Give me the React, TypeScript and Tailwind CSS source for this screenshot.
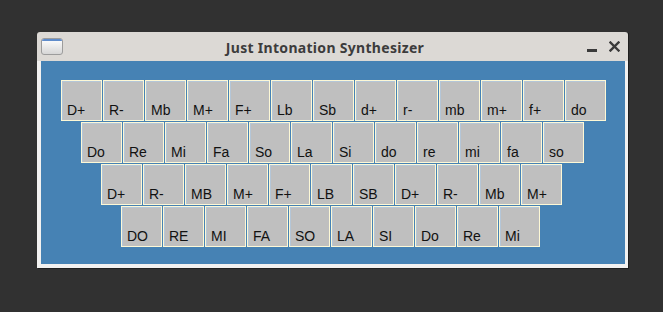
const rows = [
	['D+', 'R-', 'Mb', 'M+', 'F+', 'Lb', 'Sb', 'd+', 'r-', 'mb', 'm+', 'f+', 'do'],
	['Do', 'Re', 'Mi', 'Fa', 'So', 'La', 'Si', 'do', 're', 'mi', 'fa', 'so'],
	['D+', 'R-', 'MB', 'M+', 'F+', 'LB', 'SB', 'D+', 'R-', 'Mb', 'M+'],
	['DO', 'RE', 'MI', 'FA', 'SO', 'LA', 'SI', 'Do', 'Re', 'Mi'],
];

const indents = ['ml-0', 'ml-[20px]', 'ml-[40px]', 'ml-[60px]'];

function Key({ label }: { label: string }) {
	return (
		<div className="w-[41px] h-[41px] bg-[#bfbfbf] border border-[#fdf8d6] shadow-[inset_1px_1px_0_#b4c6d8] flex items-end pl-[5px] pb-[3px]">
			<span className="text-[14px] leading-[14px] text-[#111] font-['Liberation_Sans',sans-serif]">{label}</span>
		</div>
	);
}

export default function App() {
	return (
		<div className="w-[663px] h-[312px] bg-[#313131] pl-[37px] pt-[32px]">
			<div className="w-[591px] shadow-[1px_1px_0_#1e1e1e]">
				{/* Title bar */}
				<div className="h-[29px] bg-[#dcd9d5] flex items-center pl-[4px] pr-[8px] rounded-t-[3px]">
					<div className="w-[22px] h-[17px] rounded-[3px] border border-[#9c9c9c] bg-gradient-to-b from-white to-[#d6d6d6] overflow-hidden">
						<div className="h-[2px] bg-[#5f8ccb]" />
					</div>
					<div className="flex-1 text-center text-[14px] tracking-[0.3px] font-bold text-[#3c3c3c] font-['Noto_Sans',sans-serif] pt-[1px]">
						Just Intonation Synthesizer
					</div>
					<div className="flex items-center gap-[12px]">
						<div className="w-[10px] h-[3px] bg-[#3a3a3a] mt-[8px]" />
						<svg width="11" height="11" viewBox="0 0 11 11">
							<path d="M1.5 1.5 L9.5 9.5 M9.5 1.5 L1.5 9.5" stroke="#3a3a3a" strokeWidth="2.4" strokeLinecap="square" />
						</svg>
					</div>
				</div>

				{/* Body */}
				<div className="bg-[#f2f1f0] pl-[4px] pr-[3px] pb-[4px]">
					<div className="h-[203px] bg-[#4682b4] pl-[20px] pt-[19px] flex flex-col gap-[1px]">
						{rows.map((row, i) => (
							<div key={i} className={`flex gap-[1px] ${indents[i]}`}>
								{row.map((label, j) => (
									<Key key={j} label={label} />
								))}
							</div>
						))}
					</div>
				</div>
			</div>
		</div>
	);
}
